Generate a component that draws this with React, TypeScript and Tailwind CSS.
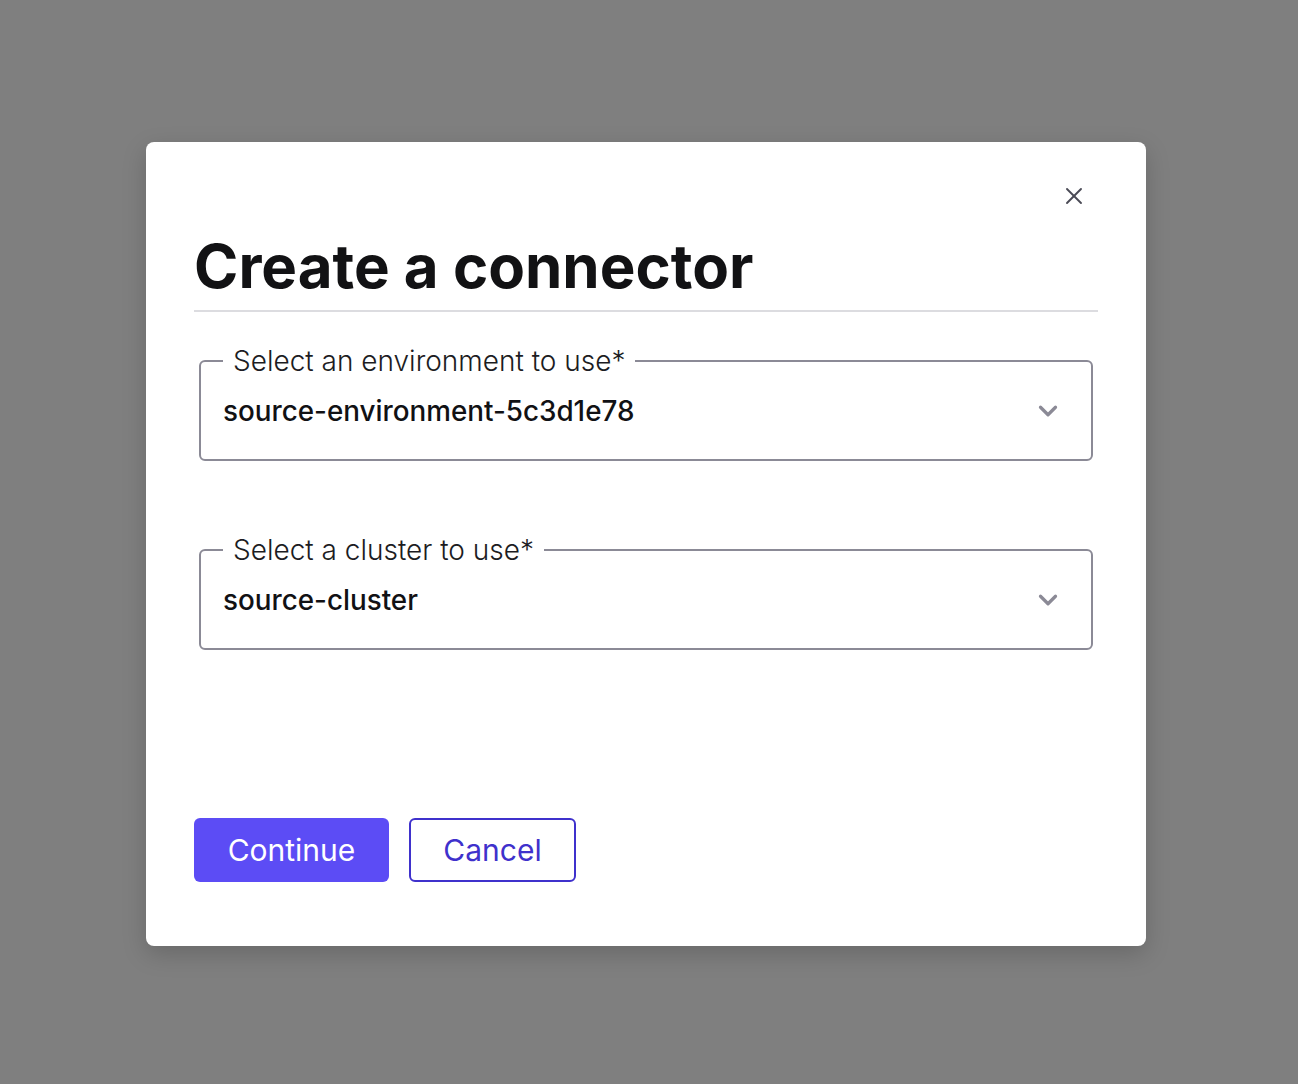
import { X, ChevronDown } from "lucide-react";

type SelectFieldProps = {
  label: string;
  value: string;
};

function SelectField({ label, value }: SelectFieldProps) {
  return (
    <fieldset className="mx-[5px] h-[117px] rounded-[6px] border-2 border-[#8b8a96] pl-[22px] pr-[28px]">
      <legend className="px-[10px] text-[28px] font-light leading-[34px] text-[#1c1c22]">{label}</legend>
      <div className="mt-[15px] flex h-[36px] items-center justify-between">
        <span className="text-[27.8px] font-medium leading-[36px] text-[#111114]">{value}</span>
        <ChevronDown className="h-[30px] w-[30px] text-[#8b8a96]" strokeWidth={2.6} />
      </div>
    </fieldset>
  );
}

export default function App() {
  return (
    <div
      className="flex min-h-[1084px] w-full items-start bg-[#7f7f7f] pl-[146px] pt-[142px]"
      style={{ fontFamily: "Inter, 'Noto Sans', sans-serif" }}
    >
      <div className="w-[1000px] rounded-[8px] bg-white px-12 pt-[40px] pb-[64px] shadow-[0_8px_24px_rgba(0,0,0,0.18)]">
        <div className="flex justify-end">
          <button className="mr-[10px] flex h-[28px] w-[28px] items-center justify-center text-[#4a4a55]">
            <X className="h-[28px] w-[28px]" strokeWidth={1.6} />
          </button>
        </div>
        <h1 className="mt-[20px] border-b-2 border-[#dcdce0] pb-[8px] text-[60px] font-bold leading-[72px] text-[#121214]">
          Create a connector
        </h1>
        <div className="mt-[32px] flex flex-col gap-[72px]">
          <SelectField label="Select an environment to use*" value="source-environment-5c3d1e78" />
          <SelectField label="Select a cluster to use*" value="source-cluster" />
        </div>
        <div className="mt-[168px] flex gap-[20px]">
          <button className="h-[64px] w-[195px] rounded-[6px] bg-[#5c4cf5] text-[30px] text-white">Continue</button>
          <button className="h-[64px] w-[167px] rounded-[6px] border-2 border-[#3f31cc] text-[30px] text-[#3f31cc]">
            Cancel
          </button>
        </div>
      </div>
    </div>
  );
}
